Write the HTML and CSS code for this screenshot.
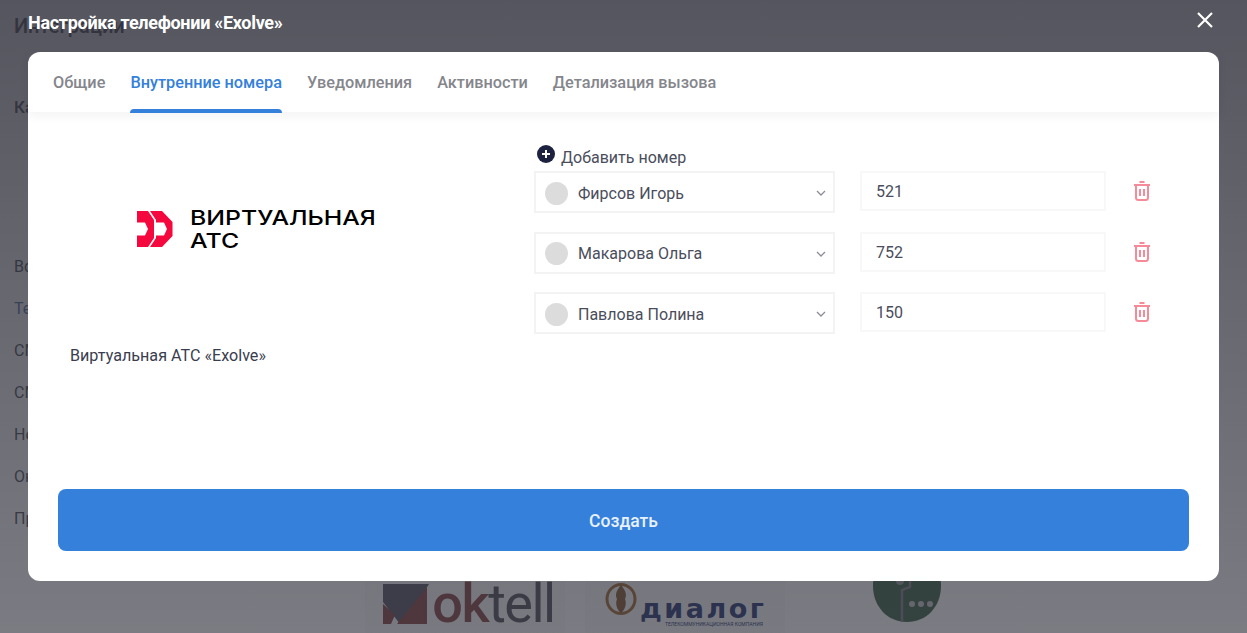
FILE: index.html
```html
<!DOCTYPE html>
<html lang="ru">
<head>
    <meta charset="UTF-8">
    <title>Настройка телефонии</title>
    <link rel="stylesheet" href="styles.css">
</head>
<body>
    <!-- page behind the dialog -->
    <div class="page">
        <div class="page-title">Интеграции</div>
        <div class="page-sub">Категории</div>
        <ul class="side-list">
            <li>Все</li>
            <li class="current">Телефония</li>
            <li>СМС</li>
            <li>СМИ</li>
            <li>Недвижимость</li>
            <li>Онлайн</li>
            <li>Прочее</li>
        </ul>
        <div class="partners">
            <div class="partner oktell-partner">
                <svg class="oktell-mark" width="46" height="40" viewBox="0 0 46 40"><path d="M0 0H46L21 40H17L0 18Z" fill="#5a5b66"/><path d="M0 20L12 31 8 40H0ZM44 3V40H14Z" fill="#8a4a48"/></svg>
                <span class="oktell"><b>ok</b>tell</span>
            </div>
            <div class="partner dialog-partner">
                <svg width="32" height="32" viewBox="0 0 32 32"><ellipse cx="16" cy="16" rx="14" ry="14.500" fill="none" stroke="#a8713a" stroke-width="3"/><path d="M16 2C21 8 22 12 20 16 22 21 20 27 16 30 12 27 10 21 12 16 10 12 11 8 16 2Z" fill="#8a5f38"/></svg>
                <div class="dialog-name">
                    <div class="dialog-word">диалог</div>
                    <div class="dialog-note">телекоммуникационная компания</div>
                </div>
            </div>
            <div class="partner green-partner">
                <svg width="68" height="46" viewBox="0 0 68 46"><path d="M0 8C0 -1 2 -4 6 -8H62C66 -4 68 -1 68 8 68 29 53 44 34 44S0 29 0 8Z" fill="#43684f"/><path d="M29 44V12L37 9V0" fill="none" stroke="#85868c" stroke-width="2.500"/><circle cx="27" cy="3" r="4" fill="#9a9b9f"/><circle cx="39" cy="26" r="3" fill="#c8c9cc"/><circle cx="48" cy="26" r="3" fill="#c8c9cc"/><circle cx="57" cy="26" r="3" fill="#c8c9cc"/></svg>
            </div>
        </div>
    </div>

    <div class="overlay">
        <div class="dialog-head">
            <h1 class="dialog-title">Настройка телефонии «Exolve»</h1>
            <svg class="close" width="18" height="18" viewBox="0 0 18 18"><path d="M2 2L16 16M16 2L2 16" stroke="#fff" stroke-width="2.2" fill="none"/></svg>
        </div>
        <div class="modal">
            <div class="tabs">
                <div class="tab">Общие</div>
                <div class="tab active">Внутренние номера</div>
                <div class="tab">Уведомления</div>
                <div class="tab">Активности</div>
                <div class="tab">Детализация вызова</div>
            </div>
            <div class="modal-body">
                <div class="about">
                    <div class="logo">
                        <svg width="36" height="36" viewBox="0 0 36 36"><path d="M0 0H11L17 9V27L11 36H0V24.500H8L11 18 8 11.500H0ZM13 0H25L35.500 11V25L25 36H13L19 27V24.500H27L30 18 27 11.500H19V9Z" fill="#f4083d"/></svg>
                        <div class="logo-text">ВИРТУАЛЬНАЯ<br>АТС</div>
                    </div>
                    <div class="about-name">Виртуальная АТС «Exolve»</div>
                </div>
                <div class="numbers">
                    <div class="add-number">
                        <svg width="18" height="18" viewBox="0 0 18 18"><circle cx="9" cy="9" r="9" fill="#1d2240"/><path d="M9 5V13M5 9H13" stroke="#fff" stroke-width="2"/></svg>
                        <span>Добавить номер</span>
                    </div>
                    <div class="number-row">
                        <div class="select">
                            <span class="avatar"></span>
                            <span class="select-name">Фирсов Игорь</span>
                            <svg width="10" height="6" viewBox="0 0 10 6"><path d="M1 1L5 5 9 1" fill="none" stroke="#8b8d98" stroke-width="1.300"/></svg>
                        </div>
                        <div class="number-input">521</div>
                        <svg class="trash" width="18" height="20" viewBox="0 0 18 20"><path d="M1 4H17M6.500 1H11.500M3 4V16.500A2.500 2.500 0 0 0 5.500 19H12.500A2.500 2.500 0 0 0 15 16.500V4M7 8V15M11 8V15" fill="none" stroke="#f58a98" stroke-width="2"/></svg>
                    </div>
                    <div class="number-row">
                        <div class="select">
                            <span class="avatar"></span>
                            <span class="select-name">Макарова Ольга</span>
                            <svg width="10" height="6" viewBox="0 0 10 6"><path d="M1 1L5 5 9 1" fill="none" stroke="#8b8d98" stroke-width="1.300"/></svg>
                        </div>
                        <div class="number-input">752</div>
                        <svg class="trash" width="18" height="20" viewBox="0 0 18 20"><path d="M1 4H17M6.500 1H11.500M3 4V16.500A2.500 2.500 0 0 0 5.500 19H12.500A2.500 2.500 0 0 0 15 16.500V4M7 8V15M11 8V15" fill="none" stroke="#f58a98" stroke-width="2"/></svg>
                    </div>
                    <div class="number-row">
                        <div class="select">
                            <span class="avatar"></span>
                            <span class="select-name">Павлова Полина</span>
                            <svg width="10" height="6" viewBox="0 0 10 6"><path d="M1 1L5 5 9 1" fill="none" stroke="#8b8d98" stroke-width="1.300"/></svg>
                        </div>
                        <div class="number-input">150</div>
                        <svg class="trash" width="18" height="20" viewBox="0 0 18 20"><path d="M1 4H17M6.500 1H11.500M3 4V16.500A2.500 2.500 0 0 0 5.500 19H12.500A2.500 2.500 0 0 0 15 16.500V4M7 8V15M11 8V15" fill="none" stroke="#f58a98" stroke-width="2"/></svg>
                    </div>
                </div>
            </div>
            <div class="modal-foot">
                <button class="button">Создать</button>
            </div>
        </div>
    </div>
</body>
</html>
```

FILE: styles.css
```css
* {
    box-sizing: border-box;
}
body {
    font-family: Roboto, Arial, sans-serif;
    background: #fff;
    margin: 0;
    height: 633px;
    overflow: hidden;
}
.page {
    padding: 15px 14px 0;
    color: #55565e;
    font-size: 16px;
}
.page-title {
    font-size: 20px;
    font-weight: 500;
    line-height: 22px;
}
.page-sub {
    margin-top: 59px;
    font-size: 17px;
    font-weight: 500;
    line-height: 22px;
}
.side-list {
    list-style: none;
    margin: 140px 0 0;
    padding: 0;
    line-height: 18px;
}
.side-list li {
    margin-bottom: 24px;
}
.side-list .current {
    color: #5a78ad;
}
.partners {
    position: absolute;
    left: 365px;
    top: 566px;
    display: flex;
    gap: 20px;
}
.partner {
    width: 200px;
    height: 67px;
    padding-top: 18px;
    display: flex;
    gap: 3px;
    justify-content: center;
    background: #fafafa;
}
.oktell-partner {
    padding-left: 8px;
}
.oktell {
    font-size: 54px;
    line-height: 40px;
    letter-spacing: -1.500px;
    color: #55565e;
}
.oktell b {
    font-weight: 500;
    color: #8a4a48;
}
.dialog-partner {
    padding-top: 17px;
    gap: 3px;
    justify-content: flex-start;
    padding-left: 20px;
}
.dialog-word {
    margin-top: 14px;
    font-family: "DejaVu Sans", Arial, sans-serif;
    font-size: 27px;
    font-weight: 700;
    line-height: 24px;
    letter-spacing: 2.500px;
    color: #2f3f78;
}
.dialog-note {
    margin-left: 25px;
    font-size: 5px;
    line-height: 6px;
    white-space: nowrap;
    text-transform: uppercase;
    color: #2f3f78;
}
.green-partner {
    padding: 0 0 0 68px;
    justify-content: flex-start;
    align-items: flex-end;
    height: 58px;
    background: none;
}
.overlay {
    position: absolute;
    inset: 0;
    padding: 0 28px;
    background: linear-gradient(180deg, rgba(42,43,54,0.8), rgba(42,43,54,0.62));
}
.dialog-head {
    height: 52px;
    display: flex;
    justify-content: space-between;
    align-items: flex-start;
    color: #fff;
}
.dialog-title {
    margin: 13px 0 0;
    font-size: 18px;
    font-weight: 700;
    line-height: 20px;
    letter-spacing: -0.3px;
}
.close {
    margin: 11px 5px 0 0;
}
.modal {
    height: 529px;
    background: #fff;
    border-radius: 12px;
    display: flex;
    flex-direction: column;
}
.tabs {
    height: 60px;
    padding: 0 25px;
    display: flex;
    gap: 25px;
    box-shadow: 0 4px 10px rgba(0,0,0,0.05);
}
.tab {
    padding-top: 22px;
    font-size: 16.300px;
    font-weight: 500;
    line-height: 18px;
    color: #85868c;
}
.tab.active {
    color: #3480db;
    position: relative;
}
.tab.active::after {
    content: "";
    position: absolute;
    left: 0;
    right: 0;
    bottom: -1px;
    height: 4px;
    background: #3480db;
    border-radius: 4px 4px 0 0;
}
.modal-body {
    flex: 1;
    display: flex;
    padding: 32px 0 0 42px;
}
.about {
    width: 464px;
}
.logo {
    margin: 62px 0 0 67px;
    display: flex;
    gap: 17px;
    align-items: center;
}
.logo-text {
    font-family: Inter, Arial, sans-serif;
    font-size: 20.500px;
    font-weight: 500;
    line-height: 23px;
    color: #000;
    transform: scaleX(1.21);
    transform-origin: left center;
}
.about-name {
    margin-top: 95px;
    font-size: 16.150px;
    line-height: 18px;
    color: #3a3d4e;
}
.numbers {
    width: 625px;
}
.add-number {
    display: flex;
    gap: 6px;
    margin-left: 3px;
    height: 27px;
    font-size: 16px;
    color: #4a4d5c;
}
.add-number svg {
    margin-top: 1px;
}
.add-number span {
    padding-top: 5px;
    line-height: 18px;
}
.number-row {
    display: flex;
    align-items: flex-start;
    height: 60.500px;
}
.select {
    width: 301px;
    height: 42px;
    margin-right: 25px;
    padding: 2px 7px 0 9px;
    display: flex;
    align-items: center;
    border: 2px solid #f3f3f4;
    font-size: 16px;
    color: #4a4d5c;
}
.avatar {
    width: 23px;
    height: 23px;
    border-radius: 50%;
    background: #dcdcdc;
    margin-right: 10px;
}
.select-name {
    flex: 1;
}
.number-input {
    width: 246px;
    height: 40px;
    padding: 0 14px;
    line-height: 38px;
    border: 2px solid #f8f8f9;
    font-size: 16px;
    color: #4a4d5c;
}
.trash {
    margin: 10px 0 0 27px;
}
.modal-foot {
    padding: 0 30px 30px;
}
.button {
    display: block;
    width: 100%;
    height: 62px;
    padding-top: 3px;
    border: none;
    border-radius: 8px;
    background: #3480db;
    color: #e8f1fb;
    font-family: inherit;
    font-size: 17.500px;
    font-weight: 500;
}
```
